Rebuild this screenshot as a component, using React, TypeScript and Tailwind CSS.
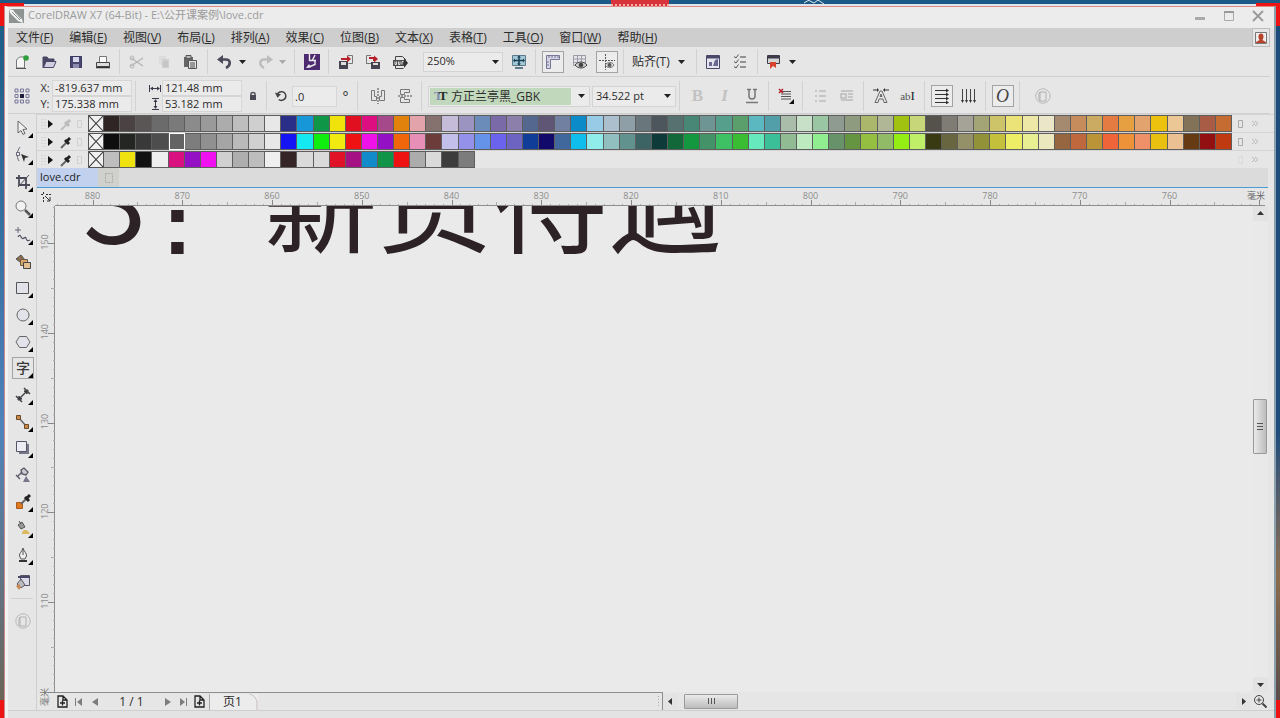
import type { ReactNode } from 'react'
import clsx from 'clsx'

const ROW_ONE = [
  '#2f2525', '#4b4343', '#5a5655', '#6b6b6b', '#7a7a7a', '#8b8b8b', '#9a9a9a', '#acacac', '#bebebe', '#cfcfcf',
  '#e8e8e8', '#2a2e88', '#1797d8', '#0f9647', '#f0e20b', '#e01020', '#dd0f80', '#a5498a', '#e0820c', '#e2a3ab',
  '#85716d', '#c4bcd8', '#9b94c0', '#6b8bb9', '#7a6aa8', '#8c7fab', '#54688f', '#5f5574', '#717fa0', '#0c8bc9',
  '#98cbe6', '#abc0cc', '#8f9fa8', '#69777d', '#4d565c', '#56716f', '#488776', '#6f9494', '#559f8c', '#5a9f6c',
  '#5bb7c0', '#529faa', '#aabcaa', '#c8dfc8', '#9bc6a3', '#8f9b90', '#8f9b7f', '#abb86c', '#b0b797', '#a2c211',
  '#c8d67a', '#55524c', '#7f7c76', '#a5a398', '#a3a577', '#cdc469', '#ebe278', '#eee8a6', '#ebe6c8', '#a58a70',
  '#c68c5c', '#cbab62', '#e47b42', '#e7a041', '#e2a36e', '#edc20e', '#ebc796', '#827258', '#a85b45', '#c56c33',
]

const ROW_TWO = [
  '#0e0e0e', '#242624', '#393939', '#4d4d4d', '#646464', '#7d7d7d', '#909090', '#a5a5a5', '#bababa', '#d0d0d0',
  '#e8e8e8', '#1414f5', '#14e8f0', '#10ee10', '#f0ea10', '#ee1212', '#f010e8', '#9410c4', '#f0660a', '#e88fb8',
  '#6b3c3a', '#c2bfea', '#9391ea', '#6593ea', '#6b62ee', '#6c64c0', '#0f3d98', '#120a6a', '#40689c', '#10beee',
  '#8fecea', '#91bfc0', '#62928e', '#3c6464', '#0f3a3a', '#126838', '#139840', '#439268', '#3ec065', '#3bbd33',
  '#66eabd', '#3bbf98', '#91bb92', '#bdeabf', '#90ee90', '#67926a', '#659540', '#94bf40', '#92bb68', '#94ee14',
  '#bfee68', '#3a3a12', '#686640', '#949068', '#929238', '#c4c03c', '#eeee66', '#e8ee92', '#ebe8be', '#966640',
  '#bf683e', '#bb9438', '#f0643a', '#ee923a', '#ee9068', '#eac010', '#ebc092', '#663a12', '#921012', '#bf3a10',
]

const ROW_THREE = [
  '#bebebe', '#efe20e', '#121212', '#eeeeee', '#d91080', '#9410c4', '#f010f0', '#d0d0d0', '#aeaeae', '#bdbdbd',
  '#efefef', '#352527', '#dadada', '#dadada', '#e01228', '#a51284', '#128bcb', '#109448', '#ee1212', '#acacac',
  '#dadada', '#3c3c3c', '#7c7c7c',
]

const MENUS = [
  ['文件', 'F'], ['编辑', 'E'], ['视图', 'V'], ['布局', 'L'], ['排列', 'A'], ['效果', 'C'],
  ['位图', 'B'], ['文本', 'X'], ['表格', 'T'], ['工具', 'O'], ['窗口', 'W'], ['帮助', 'H'],
]

// pixels per 10 mm at 250%
const STEP = 89.75

function Svg({ children, size = 16 }: { children: ReactNode; size?: number }) {
  return (
    <svg width={size} height={size} viewBox="0 0 16 16" fill="none" stroke="#4a4a52" strokeWidth="1" aria-hidden="true">
      {children}
    </svg>
  )
}

function IconButton({ label, boxed, children }: { label: string; boxed?: boolean; children: ReactNode }) {
  return (
    <button type="button" aria-label={label} className="flex w-[27px] shrink-0 items-center justify-center">
      <span className={clsx('flex h-[22px] w-[22px] items-center justify-center border', boxed ? 'border-[#a3a3a3] bg-[#ececec]' : 'border-transparent')}>
        {children}
      </span>
    </button>
  )
}

function Sep() {
  return (
    <div className="flex w-[7px] shrink-0 justify-center self-stretch py-[2px]">
      <div className="w-px bg-[#d2d2d2]" />
    </div>
  )
}

function Caret({ faded }: { faded?: boolean }) {
  return (
    <svg width="7" height="4" viewBox="0 0 7 4" aria-hidden="true" className={faded ? 'fill-[#a8a8a8]' : 'fill-[#222]'}>
      <path d="M0 0h7L3.500 4z" />
    </svg>
  )
}

function CaretButton({ label, faded }: { label: string; faded?: boolean }) {
  return (
    <button type="button" aria-label={label} className="flex h-[22px] w-[13px] shrink-0 items-center pl-[1px]">
      <Caret faded={faded} />
    </button>
  )
}

const disc = (
  <Svg>
    <circle cx="8" cy="8" r="7.200" stroke="#b9b9b9" />
    <path d="M5 4h6v9H5zM5 4l-1 1v7l1 1" stroke="#b0b0b0" />
  </Svg>
)

function TitleBar() {
  return (
    <header className="flex h-[21px] items-center bg-[#ececec] pr-[2px] pb-[4px] pl-[1px]">
      <svg width="15" height="14" viewBox="0 0 15 14" aria-hidden="true">
        <path d="M0 0h15v14H0z" fill="#8d9492" />
        <path d="M0 0l4 1 9 9 1 4-5-2-8-8z" fill="#f2f2f2" />
        <path d="M3 3l8 8M5 2l7 8" stroke="#8d9492" />
      </svg>
      <h1 className="ml-[4px] flex-1 text-[11px] text-[#9b9b9b]">CorelDRAW X7 (64-Bit) - E:\公开课案例\love.cdr</h1>
      <div className="flex gap-[1px]">
        <button type="button" aria-label="最小化" className="flex w-[28px] justify-center">
          <Svg><path d="M3 10.500h10" stroke="#aaa" strokeWidth="3" /></Svg>
        </button>
        <button type="button" aria-label="最大化" className="flex w-[28px] justify-center">
          <Svg><path d="M3.500 3.500h9v9h-9z" stroke="#aaa" /><path d="M3 4h10" stroke="#999" strokeWidth="2" /></Svg>
        </button>
        <button type="button" aria-label="关闭" className="flex w-[28px] justify-center">
          <Svg><path d="M3 3l10 10M13 3L3 13" stroke="#999" strokeWidth="1.800" /></Svg>
        </button>
      </div>
    </header>
  )
}

function MenuBar() {
  return (
    <nav className="mr-[4px] flex h-[19px] items-center bg-[#cecece] pl-[8px] text-[12px] text-[#2c2c2c]">
      <div className="flex flex-1 gap-[16px]">
        {MENUS.map(([name, key]) => (
          <button key={key} type="button" className="shrink-0 leading-[18px]">
            {name}(<u>{key}</u>)
          </button>
        ))}
      </div>
      <button type="button" aria-label="登录" className="flex h-[19px] w-[18px] items-center justify-center border border-[#bdbdbd] bg-[#e6e6e6]">
        <Svg>
          <path d="M2.500 2.500h11v11h-11z" fill="#f0eeec" stroke="#777" />
          <path d="M3 13c0-2 3-2 3.500-3C4.500 7 5.500 3.500 8 3.500S11.500 7 9.500 10c.5 1 3.500 1 3.500 3z" fill="#b8442e" stroke="none" />
        </Svg>
      </button>
    </nav>
  )
}

function StandardBar() {
  return (
    <div className="mr-[4px] flex h-[30px] items-center border-b border-[#d0d0d0] text-[11px] text-[#2c2c2c]">
      <IconButton label="新建">
        <Svg>
          <path d="M2.500 14V6l3-3h5v11z" fill="#f5f5f5" stroke="#777" />
          <path d="M2 14.500h10" stroke="#555" />
          <circle cx="12" cy="4" r="2.800" fill="#2f9e3c" stroke="none" />
        </Svg>
      </IconButton>
      <IconButton label="打开">
        <Svg>
          <path d="M2 14V3h4l1.500 2H13v3" fill="#4a4766" stroke="#4a4766" />
          <path d="M2.500 13.500l2.500-6h10l-2.500 6z" fill="#cfcfe0" stroke="#4a4766" />
        </Svg>
      </IconButton>
      <IconButton label="保存">
        <Svg>
          <path d="M2.500 2.500h11v11h-11z" fill="#4a4870" stroke="#38365c" />
          <path d="M5 3h6v5H5z" fill="#d8d8ea" stroke="none" />
          <path d="M5 10h6v4H5z" fill="#8e8cae" stroke="none" />
        </Svg>
      </IconButton>
      <IconButton label="打印">
        <Svg>
          <path d="M4.500 9V2.500h7V9" fill="#fafafa" stroke="#777" />
          <path d="M1.500 8.500h13v4h-13z" fill="#ddd" stroke="#444" />
          <path d="M1 13.500h14" stroke="#333" strokeWidth="1.500" />
        </Svg>
      </IconButton>
      <Sep />
      <IconButton label="剪切">
        <Svg>
          <path d="M2 4l12 8M2 12l12-8" stroke="#b5b5b5" strokeWidth="1.500" />
          <circle cx="3" cy="4" r="2" stroke="#b5b5b5" /><circle cx="3" cy="12" r="2" stroke="#b5b5b5" />
        </Svg>
      </IconButton>
      <IconButton label="复制">
        <Svg>
          <path d="M3 2h7v9H3z" fill="#dcdcdc" stroke="none" />
          <path d="M6 5h7v9H6z" fill="#cfcfcf" stroke="none" />
          <path d="M7 8h5M7 10h5M7 12h5" stroke="#bcbcbc" />
        </Svg>
      </IconButton>
      <IconButton label="粘贴">
        <Svg>
          <path d="M1 3h9v10H1z" fill="#666" stroke="none" />
          <path d="M3 1.500h5v3H3z" fill="#bbb" stroke="#555" />
          <path d="M5.500 6.500h8v8h-8z" fill="#e6e6e6" stroke="#555" />
          <path d="M7 9h5M7 11h5M7 13h5" />
        </Svg>
      </IconButton>
      <Sep />
      <IconButton label="撤消">
        <Svg>
          <path d="M6 1L0 5.500 6 10z" fill="#4c4a5a" stroke="none" />
          <path d="M5 5.500h4c5 0 5 6 0 8.500" stroke="#4c4a5a" strokeWidth="2.600" />
        </Svg>
      </IconButton>
      <CaretButton label="撤消列表" />
      <IconButton label="重做">
        <Svg>
          <path d="M10 1l6 4.500-6 4.500z" fill="#bdbdbd" stroke="none" />
          <path d="M11 5.500H7c-5 0-5 6 0 8.500" stroke="#bdbdbd" strokeWidth="2.400" />
        </Svg>
      </IconButton>
      <CaretButton label="重做列表" faded />
      <Sep />
      <IconButton label="搜索内容">
        <Svg>
          <path d="M0 0h16v16H0z" fill="#4b2a70" stroke="none" />
          <path d="M5.500 0v7M5.500 6.500H12M11 1L8.500 6" stroke="#eee" strokeWidth="1.400" />
          <path d="M11 6v4.500L6 12.500" stroke="#eee" strokeWidth="1.400" />
          <path d="M2 14l3-4 2 3.500z" fill="#eee" stroke="none" />
        </Svg>
      </IconButton>
      <Sep />
      <IconButton label="导入">
        <Svg>
          <path d="M9.500 1.500h5v8h-4" stroke="#777" />
          <path d="M1 7h9v8H1z" fill="#45434f" stroke="none" /><path d="M3 8h5v3H3z" fill="#ddd" stroke="none" />
          <path d="M3 5h7" stroke="#b8202a" strokeWidth="2" /><path d="M9 1.500l4 3.500-4 3.500z" fill="#b8202a" stroke="none" />
        </Svg>
      </IconButton>
      <IconButton label="导出">
        <Svg>
          <path d="M1.500 9V1.500H6" stroke="#777" /><path d="M1 9.500h5" stroke="#777" />
          <path d="M6 8h9v7H6z" fill="#45434f" stroke="none" /><path d="M8 9h5v2H8z" fill="#ddd" stroke="none" />
          <path d="M4 4h5v3" stroke="#b8202a" strokeWidth="2" /><path d="M9 1.500l4 3.500-4 3.500z" fill="#b8202a" stroke="none" />
        </Svg>
      </IconButton>
      <IconButton label="发布为 PDF">
        <Svg>
          <path d="M3.500 6V2.500h7l3 3V6M3.500 12v2.500h8" stroke="#444" />
          <path d="M1 6h12v6H1z" fill="#4a4a4a" stroke="none" /><path d="M12 4l4 5-4 5z" fill="#333" stroke="none" />
          <path d="M3 7.500v3h1.500v-3M6.500 7.500v3h1.500v-3M10 10.500v-3h1.500" stroke="#ddd" />
        </Svg>
      </IconButton>
      <div className="relative ml-[10px] h-[20px] w-[80px] shrink-0 border border-[#d4d4d4] bg-[#ebebeb]">
        <select aria-label="缩放级别" defaultValue="250%" className="h-full w-full appearance-none pl-[3px] text-[11px] outline-none">
          <option>100%</option>
          <option>250%</option>
          <option>400%</option>
        </select>
        <span className="pointer-events-none absolute top-0 right-[3px] flex h-full items-center"><Caret /></span>
      </div>
      <div className="w-[2px]" />
      <IconButton label="全屏预览">
        <Svg>
          <path d="M1.500 1.500h13v10h-13z" fill="#a4c9d6" stroke="#5d7a8b" />
          <path d="M8 2.500v8M3 6.500h10" stroke="#173f55" strokeWidth="1.500" />
          <path d="M8 1.500l2 2H6zM8 11.500l-2-2h4zM2 6.500l2-2v4zM14 6.500l-2-2v4z" fill="#173f55" stroke="none" />
          <path d="M4 14h8" stroke="#5d7a8b" strokeWidth="2" />
        </Svg>
      </IconButton>
      <Sep />
      <IconButton label="显示标尺" boxed>
        <Svg>
          <path d="M1.500 1.500h13v4h-9v9h-4z" fill="#d5d5e6" stroke="#77779a" />
          <path d="M4 2v2M7 2v2M10 2v2M13 2v2M2 8h2M2 11h2" stroke="#77779a" />
        </Svg>
      </IconButton>
      <IconButton label="显示网格">
        <Svg>
          <path d="M1.500 1.500h12v10h-12zM5.500 1.500v10M9.500 1.500v10M1.500 5h12M1.500 8.500h12" stroke="#9a9aab" />
          <path d="M3 11c3-4 9-4 12 0-3 4-9 4-12 0z" fill="#ccc" stroke="#444" /><circle cx="9" cy="11" r="2.300" fill="#444" stroke="none" />
        </Svg>
      </IconButton>
      <IconButton label="显示辅助线" boxed>
        <Svg>
          <path d="M6.500 0v16M0 6.500h16" stroke="#555" strokeDasharray="2 1" />
          <path d="M6 11c2.500-3.500 7-3.500 9 0-2 3.500-6.500 3.500-9 0z" fill="#ddd" stroke="#777" /><circle cx="10.500" cy="11" r="2" fill="#555" stroke="none" />
        </Svg>
      </IconButton>
      <Sep />
      <button type="button" className="flex shrink-0 items-center gap-[8px] pr-[8px] pl-[5px] text-[12px]">贴齐(T) <Caret /></button>
      <Sep />
      <IconButton label="欢迎屏幕">
        <Svg>
          <path d="M1.500 1.500h13v13h-13z" fill="#e6e6f0" stroke="#4a4868" /><path d="M1 2h14v2.500H1z" fill="#4a4868" stroke="none" />
          <path d="M4 12V8h3v4zM8 12l2-6 3-1v7z" fill="#6b6990" stroke="none" />
        </Svg>
      </IconButton>
      <IconButton label="选项">
        <Svg>
          <path d="M8 3h6M8 8h6M8 13h6" stroke="#777" strokeWidth="1.500" />
          <path d="M2 2.500l2 1.500 2.500-3.500M2 7.500L4 9l2.500-3.500M2 12.500L4 14l2.500-3.500" stroke="#555" />
        </Svg>
      </IconButton>
      <Sep />
      <IconButton label="应用程序启动器">
        <Svg>
          <path d="M1.500 1.500h12v8h-12z" fill="#d5d5d5" stroke="#3d3b4a" /><path d="M1 2h13v2.500H1z" fill="#3d3b4a" stroke="none" />
          <path d="M4 8h6v6l-3-2-3 3z" fill="#d8452c" stroke="none" />
        </Svg>
      </IconButton>
      <CaretButton label="应用程序列表" />
    </div>
  )
}

function Field({ label, icon, value }: { label: string; icon: ReactNode; value: string }) {
  return (
    <label className="flex h-[16px] items-center">
      <span className="flex w-[14px] shrink-0 justify-center" aria-label={label}>{icon}</span>
      <input defaultValue={value} className="h-[16px] w-[80px] border border-[#d6d6d6] bg-[#ebebeb] pl-[2px] text-[11px] outline-none" />
    </label>
  )
}

function PropertyBar() {
  return (
    <div className="mr-[4px] flex h-[37px] items-center border-b border-[#d0d0d0] pt-[2px] text-[11px] text-[#2c2c2c]">
      <IconButton label="对象原点">
        <Svg>
          <path d="M1 1h3v3H1zM6.500 1h3v3h-3zM12 1h3v3h-3zM1 6.500h3v3H1zM12 6.500h3v3h-3zM1 12h3v3H1zM6.500 12h3v3h-3zM12 12h3v3h-3z" stroke="#77779a" />
          <path d="M6 6h4v4H6z" fill="#1e1c3c" stroke="none" />
        </Svg>
      </IconButton>
      <div className="ml-[3px] shrink-0">
        <Field label="X" icon="X:" value="-819.637 mm" />
        <Field label="Y" icon="Y:" value="175.338 mm" />
      </div>
      <Sep />
      <div className="ml-[9px] shrink-0">
        <Field
          label="宽度"
          icon={<svg width="12" height="9" viewBox="0 0 12 9" stroke="#3a3a4a" aria-hidden="true"><path d="M.5 1v7M11.500 1v7M2 4.500h8" /><path d="M1 4.500l3-2v4zM11 4.500l-3-2v4z" fill="#3a3a4a" stroke="none" /></svg>}
          value="121.48 mm"
        />
        <Field
          label="高度"
          icon={<svg width="9" height="12" viewBox="0 0 9 12" stroke="#3a3a4a" aria-hidden="true"><path d="M1 .5h7M1 11.500h7M4.500 2v8" /><path d="M4.500 1l-2 3h4zM4.500 11l-2-3h4z" fill="#3a3a4a" stroke="none" /></svg>}
          value="53.182 mm"
        />
      </div>
      <button type="button" aria-label="锁定比率" className="flex w-[21px] shrink-0 justify-center">
        <svg width="8" height="10" viewBox="0 0 8 10" aria-hidden="true"><path d="M2 5V3c0-2 4-2 4 0v2" fill="none" stroke="#555" strokeWidth="1.500" /><path d="M1 4h6v5H1z" fill="#4a4a55" /></svg>
      </button>
      <Sep />
      <label className="flex shrink-0 items-center">
        <span className="flex w-[22px] justify-center" aria-label="旋转角度">
          <Svg size={14}><path d="M4 6c1.500-4 9-4 9.500 2 0 5-6 6-8 4" stroke="#444" strokeWidth="1.700" /><path d="M1 4l3 6 4-4z" fill="#444" stroke="none" /></Svg>
        </span>
        <input defaultValue=".0" className="h-[21px] w-[45px] border border-[#d6d6d6] bg-[#ebebeb] pl-[2px] text-[11px] outline-none" />
        <span className="w-[17px] text-center text-[14px]">°</span>
      </label>
      <Sep />
      <div className="w-[3px]" />
      <IconButton label="水平镜像">
        <Svg><path d="M1.500 2.500h3v6h2v4h-5zM14.500 2.500h-3v6h-2v4h5z" stroke="#777" /><path d="M8 0v16" strokeDasharray="2 1" /></Svg>
      </IconButton>
      <IconButton label="垂直镜像">
        <Svg><path d="M12.500 1.500h-9v5h4v-2h5zM12.500 14.500h-9v-5h4v2h5z" stroke="#777" /><path d="M1 8h15" strokeDasharray="2 1" /></Svg>
      </IconButton>
      <Sep />
      <div className="relative ml-[3px] h-[21px] w-[162px] shrink-0 border border-[#d4d4d4] bg-[#ebebeb] p-px">
        <select aria-label="字体" defaultValue="方正兰亭黑_GBK" className="h-full w-[141px] appearance-none bg-[#c2d8bd] pl-[21px] text-[12px] outline-none">
          <option>方正兰亭黑_GBK</option>
          <option>微软雅黑</option>
        </select>
        <span className="pointer-events-none absolute top-0 left-[5px] flex h-full items-center font-['Liberation_Serif',serif] text-[13px] font-bold"><span className="-mr-[4px] text-[#7f8bb0]">T</span>T</span>
        <span className="pointer-events-none absolute top-0 right-[4px] flex h-full items-center"><Caret /></span>
      </div>
      <div className="relative ml-[2px] h-[21px] w-[84px] shrink-0 border border-[#d4d4d4] bg-[#ebebeb]">
        <select aria-label="字体大小" defaultValue="34.522 pt" className="h-full w-full appearance-none pl-[3px] text-[11px] outline-none">
          <option>24 pt</option>
          <option>34.522 pt</option>
        </select>
        <span className="pointer-events-none absolute top-0 right-[4px] flex h-full items-center"><Caret /></span>
      </div>
      <Sep />
      <div className="w-[1px]" />
      <IconButton label="粗体"><span className="font-['Liberation_Serif',serif] text-[17px] font-bold text-[#c2c2c2]">B</span></IconButton>
      <IconButton label="斜体"><span className="font-['Liberation_Serif',serif] text-[17px] font-bold text-[#c2c2c2] italic">I</span></IconButton>
      <IconButton label="下划线">
        <Svg><path d="M3 1.500h4M9 1.500h4M5 2v6c0 4 6 4 6 0V2" stroke="#777" strokeWidth="1.500" /><path d="M2 14.500h12" stroke="#777" strokeWidth="1.500" /></Svg>
      </IconButton>
      <Sep />
      <IconButton label="文本对齐">
        <Svg>
          <path d="M3 3.500h10M3 6h10M3 8.500h10M3 11h10" stroke="#555" /><path d="M1 1l4 4M5 1L1 5" stroke="#b8202a" strokeWidth="1.500" />
          <path d="M16 11v5h-5z" fill="#111" stroke="none" />
        </Svg>
      </IconButton>
      <Sep />
      <IconButton label="项目符号列表"><Svg><path d="M3 3h2M3 8h2M3 13h2M7 3h7M7 8h7M7 13h7" stroke="#bcbcbc" strokeWidth="1.500" /></Svg></IconButton>
      <IconButton label="首字下沉"><Svg><path d="M2 3h12M9 6h5M9 9h5M2 12h12M2 6h5v4H2z" stroke="#bcbcbc" strokeWidth="1.500" /></Svg></IconButton>
      <Sep />
      <IconButton label="文本属性">
        <Svg><path d="M2 14.500L7 3h2l5 11.500h-3L10 11H6l-1 3.500zM7 8.500h2L8 6z" stroke="#666" /><path d="M0 2h5M11 2h5" stroke="#333" /><path d="M4 0l2 2-2 2zM12 0l-2 2 2 2z" fill="#333" stroke="none" /></Svg>
      </IconButton>
      <IconButton label="编辑文本"><span className="font-['Liberation_Serif',serif] text-[11px] text-[#555]">ab<b className="text-[13px] font-normal text-[#222]">I</b></span></IconButton>
      <Sep />
      <IconButton label="水平方向" boxed>
        <Svg><path d="M1 2.500h13M1 6.500h13M1 10.500h13M1 14.500h13" stroke="#333" /><path d="M12 .5l3 2-3 2zM12 4.500l3 2-3 2zM12 8.500l3 2-3 2zM12 12.500l3 2-3 2z" fill="#333" stroke="none" /></Svg>
      </IconButton>
      <IconButton label="垂直方向"><Svg><path d="M1.500 1v13M5.500 1v13M9.500 1v13M13.500 1v13" stroke="#444" /><path d="M0 12h3l-1.500 3zM4 12h3l-1.500 3zM8 12h3l-1.500 3zM12 12h3l-1.500 3z" fill="#333" stroke="none" /></Svg></IconButton>
      <Sep />
      <IconButton label="交互式 OpenType" boxed><span className="font-['Liberation_Serif',serif] text-[18px] text-[#444] italic">O</span></IconButton>
      <Sep />
      <div className="w-[6px]" />
      <IconButton label="快速自定义">{disc}</IconButton>
    </div>
  )
}

function PaletteRow({ name, colors, selected, faded }: { name: string; colors: string[]; selected?: number; faded?: boolean }) {
  return (
    <div className="flex h-[18px] items-center border-t border-[#d4d4d4]">
      <div className="flex w-[51px] shrink-0 items-center">
        <svg width="47" height="14" viewBox="0 0 47 14" aria-hidden="true">
          <path d="M5 2v11M8 2v11" stroke="#c4c4c4" strokeDasharray="1 2" />
          <path d="M11 3l5 4-5 4z" fill="#111" />
          <path d="M24 13l6-6" stroke={faded ? '#c0c0c0' : '#666'} strokeWidth="2" />
          <path d="M28 5l4 4M29 7l4-4" stroke={faded ? '#bcbcbc' : '#222'} strokeWidth="3" />
          <path d="M40.500 3.500h4v7h-4z" stroke="#d0d0d0" fill="none" />
        </svg>
      </div>
      <div className="grid h-[17px] min-w-0 flex-1 grid-cols-[repeat(71,minmax(0,1fr))]">
        <button type="button" aria-label={`${name} 无色`} className="border border-[#555] bg-[#f0f0f0]">
          <svg viewBox="0 0 14 14" preserveAspectRatio="none" className="h-full w-full" stroke="#333" aria-hidden="true"><path d="M0 0l14 14M14 0L0 14" /></svg>
        </button>
        {colors.map((color, i) => (
          <button
            key={i}
            type="button"
            aria-label={`${name} ${color}`}
            style={{ backgroundColor: color }}
            className={clsx('border-y border-r', i === selected ? 'border-l border-white' : 'border-[#5e5e5e]')}
          />
        ))}
      </div>
      <svg width="42" height="12" viewBox="0 0 42 12" fill="none" className="shrink-0" aria-hidden="true">
        <path d="M6.500 2.500h4v7h-4z" stroke={colors.length > 30 ? '#aaa' : '#dadada'} />
        <path d="M20 3l3 2.500L20 8M23 3l3 2.500L23 8" stroke="#b8b8b8" />
      </svg>
    </div>
  )
}

const TOOLS: { name: string; flyout?: boolean; boxed?: boolean; icon: ReactNode }[] = [
  { name: '选择', flyout: true, icon: <path d="M3 1l9 8-4 .5 2 4-2 1-2-4-3 2.500z" fill="#f0f0f0" stroke="#666" /> },
  { name: '形状', flyout: true, icon: <><path d="M5 0C2 4 1 9 4 14" stroke="#667" /><path d="M1.500 5.500h3v3h-3z" fill="#eee" stroke="#667" /><path d="M6 7l8 3-4 1-1 4z" fill="#333" stroke="none" /></> },
  { name: '裁剪', flyout: true, icon: <><path d="M4 1v10h11M1 4h10v11" stroke="#4a4a58" strokeWidth="1.800" /><path d="M3 13L14 1" /></> },
  { name: '缩放', flyout: true, icon: <><circle cx="6" cy="6" r="5" fill="#f2f2f2" stroke="#777" /><path d="M10 10l5 5" stroke="#555" strokeWidth="2.500" /></> },
  { name: '手绘', flyout: true, icon: <><path d="M3 0v6M0 3h6" stroke="#667" /><path d="M3 10c3-5 3 4 6 1s1 5 6 2" stroke="#556" strokeWidth="1.300" /></> },
  { name: '智能填充', icon: <><path d="M1 5l5-4 4 5-5 2z" fill="#8b6c50" stroke="#555" /><path d="M5.500 5.500h7v6h-7z" fill="#d9a56a" stroke="#6d5a44" /><path d="M8.500 8.500h7v6h-7z" fill="#e3c08f" stroke="#444" /></> },
  { name: '矩形', flyout: true, icon: <path d="M1.500 2.500h12v11h-12z" fill="#e2e2ea" stroke="#555" /> },
  { name: '椭圆形', flyout: true, icon: <circle cx="8" cy="8" r="6" fill="#e2e2ea" stroke="#666" /> },
  { name: '多边形', flyout: true, icon: <path d="M4.500 2.500h7l3.500 5.500-3.500 5.500h-7L1 8z" fill="#e2e2ea" stroke="#666" /> },
  { name: '文本', flyout: true, boxed: true, icon: null },
  { name: '平行度量', flyout: true, icon: <><path d="M3 13L13 3" stroke="#444" strokeWidth="1.500" /><path d="M1 9l6 6M9 1l6 6" stroke="#444" strokeWidth="1.500" /><path d="M3 13l1-4 3 3zM13 3l-1 4-3-3z" fill="#333" /></> },
  { name: '直线连接器', flyout: true, icon: <><path d="M4 4l8 9" stroke="#666" strokeWidth="1.500" /><path d="M1.500 1.500h4v4h-4zM9.500 10.500h4v4h-4z" fill="#c98a4a" stroke="#6b4a2a" /></> },
  { name: '阴影', flyout: true, icon: <><path d="M4 4h10v10H4z" fill="#77778a" stroke="none" /><path d="M1.500 1.500h10v10h-10z" fill="#ececf4" stroke="#556" /></> },
  { name: '透明度', icon: <><path d="M6 3l3-2 4 4-2 3-4-1z" fill="#ccc" stroke="#556" strokeWidth="1.300" /><path d="M7 5l-4 4M1 8l4 4" stroke="#556" strokeWidth="1.300" /><path d="M8 15l3-6 4 6z" fill="#77778a" stroke="none" /></> },
  { name: '颜色滴管', flyout: true, icon: <><path d="M1.500 8.500h6v6h-6z" fill="#e07820" stroke="#a85a1c" /><path d="M6 10l6-6" stroke="#666" strokeWidth="2" /><path d="M10 3l4 4M11 5l4-4" stroke="#222" strokeWidth="3" /></> },
  { name: '交互式填充', flyout: true, icon: <><path d="M3 5l4-3 3 5-4 2z" fill="#999" stroke="#555" /><path d="M4 1l2 3" /><path d="M7 14c0-4 3-5 6-3l2 3z" fill="#d9b95c" stroke="none" /></> },
  { name: '轮廓笔', flyout: true, icon: <><path d="M8 1c-1 4-4 5-3.500 8L6 12h4l1.500-3C12 6 9 5 8 1zM8 2v6" fill="#eee" stroke="#555" /><path d="M4 14h8" stroke="#333" strokeWidth="2" /></> },
  { name: '编辑填充', icon: <><path d="M5.500 1.500h9v10h-9z" fill="#dcdce8" stroke="#556" /><path d="M3 2h12v2H3z" fill="#4a4868" stroke="none" /><path d="M2 10l4-5 4 6-4 3z" fill="#bbb" stroke="#556" /><path d="M1 12l3-2 2 3-2 3z" fill="#c98a5a" stroke="none" /></> },
]

function Toolbox() {
  return (
    <aside className="w-[29px] shrink-0 border-r border-[#cfcfcf] pt-[1px]">
      <div className="flex h-[480px] flex-col pl-[2px]">
        {TOOLS.map((tool) => (
          <button key={tool.name} type="button" aria-label={tool.name} className="flex min-h-0 flex-1 items-center justify-center">
            <span className={clsx('relative flex h-[22px] w-[22px] items-center justify-center border', tool.boxed ? 'border-[#a3a3a3]' : 'border-transparent')}>
              {tool.boxed ? <span className="text-[14px] leading-[16px] font-medium text-[#3a3a3a]">字</span> : <Svg>{tool.icon}</Svg>}
              {tool.flyout && (
                <svg width="5" height="5" viewBox="0 0 5 5" className="absolute right-0 bottom-0" aria-hidden="true"><path d="M5 0v5H0z" /></svg>
              )}
            </span>
          </button>
        ))}
      </div>
      <div className="mx-[3px] mt-[3px] border-t border-[#d0d0d0]" />
      <button type="button" aria-label="快速自定义工具" className="mt-[14px] flex w-full justify-center pl-[2px]">{disc}</button>
    </aside>
  )
}

function HorizontalRuler() {
  return (
    <div className="mr-[9px] flex h-[18px] shrink-0">
      <div className="flex w-[18px] items-center justify-center">
        <svg width="10" height="10" viewBox="0 0 10 10" fill="none" stroke="#333" aria-hidden="true"><path d="M2.500 0v3M0 2.500h3M5 2.500h5M2.500 5v5" strokeDasharray="2 1" /><path d="M4 4l5 5M9 5v4H6" /></svg>
      </div>
      <svg className="h-[18px] min-w-0 flex-1 border-b border-[#8e8e8e]" aria-hidden="true">
        {Array.from({ length: 220 }, (_, i) => {
          const x = 37.5 + ((i - 4) * STEP) / 10
          const tall = (i - 4) % 10 === 0 ? 12 : (i - 4) % 5 === 0 ? 14 : 16
          return <path key={i} d={`M${Math.round(x)}.5 ${tall}V18`} stroke={tall === 12 ? '#888' : '#aaa'} />
        })}
        {Array.from({ length: 13 }, (_, i) => (
          <text key={i} x={37.5 + i * STEP} y="11" textAnchor="middle" fontSize="9" fill="#8c8c8c">{880 - i * 10}</text>
        ))}
        <text x="100%" y="11" textAnchor="end" fontSize="9" fill="#666">毫米</text>
      </svg>
    </div>
  )
}

function VerticalRuler() {
  return (
    <svg className="w-[18px] shrink-0 overflow-visible border-r border-[#8e8e8e]" aria-hidden="true">
      {Array.from({ length: 55 }, (_, i) => {
        const y = Math.round(37 + ((i - 4) * STEP) / 10)
        const left = (i - 4) % 10 === 0 ? 11 : (i - 4) % 5 === 0 ? 14 : 16
        return <path key={i} d={`M${left} ${y}.5H18`} stroke={left === 11 ? '#888' : '#aaa'} />
      })}
      {['150', '140', '130', '120', '110'].map((label, i) => (
        <text key={label} transform={`translate(11 ${36 + i * STEP}) rotate(-90)`} textAnchor="middle" fontSize="9" fill="#8c8c8c">{label}</text>
      ))}
      <text transform="translate(11 500) rotate(-90)" fontSize="9" fill="#777">毫米</text>
    </svg>
  )
}

function Arrow({ label, d }: { label: string; d: string }) {
  return (
    <button type="button" aria-label={label} className="flex h-[15px] w-[15px] shrink-0 items-center justify-center bg-[#e3e3e3]">
      <svg width="7" height="7" viewBox="0 0 7 7" fill="#333" aria-hidden="true"><path d={d} /></svg>
    </button>
  )
}

function PageNav() {
  const addPage = <svg width="11" height="13" viewBox="0 0 11 13" fill="none" stroke="#222" aria-hidden="true"><path d="M1 1h5l4 4v7H1zM6 1v4h4M5.500 5.500v5M3 8h5" strokeWidth="1.300" /></svg>
  return (
    <div className="flex h-[18px] shrink-0 items-center pl-[18px] text-[12px] text-[#2c2c2c]">
      <div className="flex h-full w-[608px] shrink-0 items-center border-t border-r border-[#8e8e8e] pl-[2px]">
        <button type="button" aria-label="在前面添加页" className="mr-[7px]">{addPage}</button>
        <button type="button" aria-label="第一页" className="mr-[9px]">
          <svg width="8" height="8" viewBox="0 0 8 8" fill="#7d7d7d" aria-hidden="true"><path d="M0 0h1v8H0zM7 0v8L2 4z" /></svg>
        </button>
        <button type="button" aria-label="上一页">
          <svg width="6" height="8" viewBox="0 0 6 8" fill="#7d7d7d" aria-hidden="true"><path d="M6 0v8L0 4z" /></svg>
        </button>
        <span className="w-[67px] text-center">1 / 1</span>
        <button type="button" aria-label="下一页" className="mr-[8px]">
          <svg width="6" height="8" viewBox="0 0 6 8" fill="#7d7d7d" aria-hidden="true"><path d="M0 0v8l6-4z" /></svg>
        </button>
        <button type="button" aria-label="最后一页" className="mr-[7px]">
          <svg width="8" height="8" viewBox="0 0 8 8" fill="#7d7d7d" aria-hidden="true"><path d="M7 0h1v8H7zM1 0v8l5-4z" /></svg>
        </button>
        <button type="button" aria-label="在后面添加页" className="mr-[4px]">{addPage}</button>
        <button type="button" className="flex h-[16px] items-center border-l border-[#aaa] bg-[#ececec] pl-[13px] leading-[16px]">
          页1
          <svg width="16" height="16" viewBox="0 0 16 16" fill="none" aria-hidden="true"><path d="M7 0c3 0 8 4 8 9v7" stroke="#c9bcbc" /></svg>
        </button>
        <svg width="3" height="12" viewBox="0 0 3 12" className="mr-[2px] ml-auto" aria-hidden="true"><path d="M1.500 0v12" stroke="#aaa" strokeDasharray="1 2" /></svg>
      </div>
      <Arrow label="向左滚动" d="M5 0v7L1 3.500z" />
      <div className="flex flex-1 pl-[6px]">
        <div className="flex h-[15px] w-[54px] items-center justify-center gap-[2px] rounded-[1px] border border-[#9a9a9a] bg-linear-to-b from-[#eaeaea] to-[#bdbdbd]">
          <i className="h-[6px] w-px bg-[#555]" />
          <i className="h-[6px] w-px bg-[#555]" />
          <i className="h-[6px] w-px bg-[#555]" />
        </div>
      </div>
      <Arrow label="向右滚动" d="M2 0v7l4-3.500z" />
      <button type="button" aria-label="导航器" className="mr-[7px] ml-[2px]">
        <svg width="14" height="14" viewBox="0 0 14 14" fill="none" stroke="#444" aria-hidden="true"><circle cx="6" cy="6" r="4.500" /><path d="M6 3.500v5M3.500 6h5" /><path d="M9.500 9.500l4 4" strokeWidth="2" /></svg>
      </button>
    </div>
  )
}

function Workspace() {
  return (
    <div className="flex min-h-0 flex-1">
      <VerticalRuler />
      <main className="min-w-0 flex-1 overflow-hidden bg-[#eaeaea]">
        <p className="-mt-[72px] ml-[28px] flex items-end font-['Noto_Sans_CJK_SC',sans-serif] text-[115px] leading-[120px] whitespace-nowrap text-[#2d2226]">
          <span>3</span>
          <span className="w-[116px] pl-[16px] font-['Liberation_Sans',sans-serif] text-[88px] leading-[60px] font-bold">:</span>
          <span>薪资待遇</span>
        </p>
      </main>
      <div className="mr-[6px] flex w-[16px] shrink-0 flex-col items-center bg-[#e9e9e9]">
        <Arrow label="向上滚动" d="M0 5h7L3.500 1z" />
        <div className="flex min-h-0 flex-1 flex-col pt-[178px]">
          <div className="flex h-[55px] w-[14px] flex-col items-center justify-center gap-[2px] rounded-[1px] border border-[#9a9a9a] bg-linear-to-r from-[#eaeaea] to-[#bdbdbd]">
            <i className="h-px w-[6px] bg-[#555]" />
            <i className="h-px w-[6px] bg-[#555]" />
            <i className="h-px w-[6px] bg-[#555]" />
          </div>
        </div>
        <Arrow label="向下滚动" d="M0 2h7L3.500 6z" />
      </div>
    </div>
  )
}

export default function App() {
  return (
    <div className="relative flex h-screen flex-col overflow-hidden bg-[#1b5a86] font-['Open_Sans','Noto_Sans_CJK_SC',sans-serif]">
      <div className="flex h-[4px] shrink-0 justify-center">
        <svg width="24" height="4" viewBox="0 0 24 4" fill="none" stroke="#e8e8e8" className="absolute top-0 right-[452px]" aria-hidden="true">
          <path d="M0 3l5-3M4 0l6 3 4-3 6 4" />
        </svg>
      </div>
      <div className="flex min-h-0 flex-1">
        <div className="w-[4px] shrink-0 bg-linear-to-b from-[#1b5a86] via-[#4f83bb] via-60% to-[#6d6250]" />
        <div className="flex min-w-0 flex-1 flex-col border-t-2 border-r-2 border-l border-t-[#dfe5ea] border-r-[#8aa0ac] border-l-[#c98a8a] bg-[#e6e6e6]">
          <div className="flex min-h-0 flex-1 flex-col border-t border-l-[3px] border-t-[#e08a86] border-l-[#f2f2f2]">
            <TitleBar />
            <MenuBar />
            <StandardBar />
            <PropertyBar />
            <div className="flex min-h-0 flex-1">
              <Toolbox />
              <div className="flex min-w-0 flex-1 flex-col">
                <div className="shrink-0">
                  <PaletteRow name="默认调色板" colors={ROW_ONE} faded />
                  <PaletteRow name="默认 RGB 调色板" colors={ROW_TWO} selected={4} />
                  <PaletteRow name="文档调色板" colors={ROW_THREE} />
                </div>
                <div className="mr-[6px] flex h-[20px] shrink-0 border-b border-[#4c9cd4] bg-[#dbdbdb] text-[11px]">
                  <button type="button" className="bg-[#c2d2ee] pr-[18px] pl-[3px] text-[#1c1c1c]">love.cdr</button>
                  <button type="button" aria-label="新建文档" className="flex w-[21px] items-center justify-center bg-[#d0d0cc]">
                    <svg width="8" height="10" viewBox="0 0 8 10" fill="none" stroke="#aaa" aria-hidden="true"><path d="M.5.5h7v9h-7z" strokeDasharray="2 1" /></svg>
                  </button>
                </div>
                <HorizontalRuler />
                <Workspace />
                <PageNav />
              </div>
            </div>
            <footer className="h-[8px] shrink-0 border-t border-[#cfcfcf] bg-[#e3e3e3]" />
          </div>
        </div>
        <div className="w-[4px] shrink-0 bg-linear-to-b from-[#1c4c7c] from-60% via-[#8c6c4c] via-80% to-[#54484a]" />
      </div>
      {/* capture frame handles */}
      <div className="absolute top-0 left-1/2 h-[6px] w-[58px] -translate-x-1/2 border-b-2 border-dotted border-[#f0b0a8] bg-[#d8323a]" />
      <div className="absolute top-[3px] left-0 h-[23px] w-[24px] border-t-[3px] border-l-4 border-[#ee1414]" />
      <div className="absolute top-[3px] right-0 h-[23px] w-[24px] border-t-[3px] border-r-4 border-[#ee1414]" />
      <div className="absolute bottom-0 left-0 h-[18px] w-[4px] bg-[#ee1414]" />
      <div className="absolute right-0 bottom-0 h-[18px] w-[4px] bg-[#ee1414]" />
    </div>
  )
}
